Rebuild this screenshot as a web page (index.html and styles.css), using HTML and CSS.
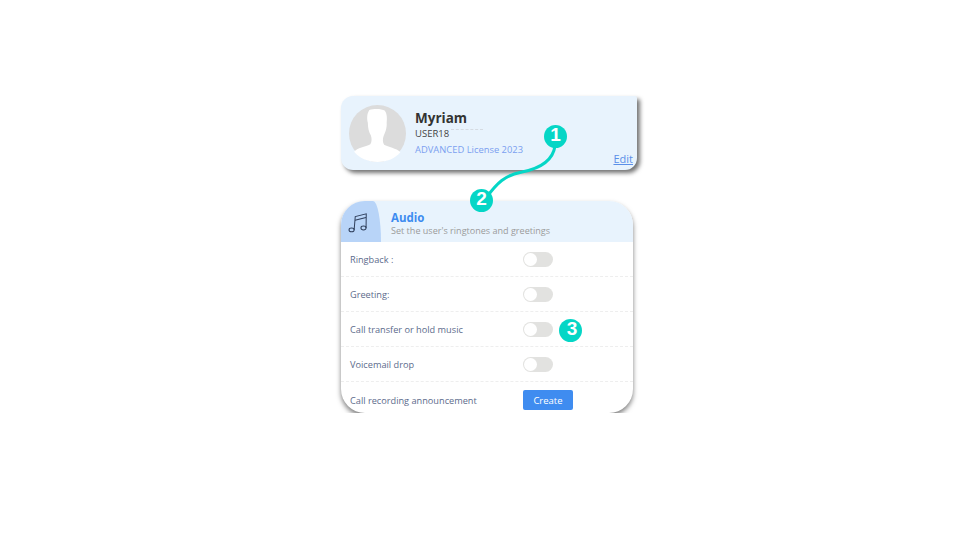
FILE: index.html
```html
<!DOCTYPE html>
<html lang="en">
<head>
    <meta charset="UTF-8">
    <title>User settings</title>
    <link rel="stylesheet" href="styles.css">
</head>
<body>

<div class="page">
    <div class="profile-card">
        <svg class="avatar" viewBox="0 0 56 56">
            <circle cx="28" cy="28" r="28" fill="#dcdcdc"/>
            <path fill="#fff" d="M20 5c4-1.500 12-1.500 15 .5 2.500 3 2.500 8 2 12 .5 5-1.500 10-3 13-1 3-1 6 .5 8.500 4 2.500 12 3 16 7.500-5 6-13 9.500-22.500 9.500S10 52 5 46c3-4 11-5 16-7.500 1.500-2.500 1.500-5.500.5-8.500-2-3-3-8-3-12.500-1-4-1-9 1.500-12.500z"/>
        </svg>
        <div class="profile-info">
            <div class="profile-name">Myriam</div>
            <div class="profile-user">USER18<span class="profile-blur"></span></div>
            <div class="profile-license">ADVANCED License 2023</div>
        </div>
        <a class="profile-edit" href="#">Edit</a>
    </div>

    <div class="audio-card">
        <div class="audio-header">
            <div class="audio-icon">
                <svg viewBox="0 0 24 24" width="22" height="22" fill="none" stroke="#2f3f5c" stroke-width="1.1">
                    <ellipse cx="5" cy="19.500" rx="2.800" ry="2.100"/>
                    <ellipse cx="18" cy="17.500" rx="2.800" ry="2.100"/>
                    <path d="M7.800 19.500 9 5l12-3-.2 15.500"/>
                    <path d="M8.700 9l12-3"/>
                </svg>
            </div>
            <div class="audio-text">
                <div class="audio-title">Audio</div>
                <div class="audio-sub">Set the user's ringtones and greetings</div>
            </div>
        </div>
        <div class="row"><span>Ringback :</span><span class="toggle"></span></div>
        <div class="row"><span>Greeting:</span><span class="toggle"></span></div>
        <div class="row"><span>Call transfer or hold music</span><span class="toggle"></span></div>
        <div class="row"><span>Voicemail drop</span><span class="toggle"></span></div>
        <div class="row row-last"><span>Call recording announcement</span><button class="create-btn">Create</button></div>
    </div>
</div>

<!-- tutorial annotations over the page -->
<svg class="connector" width="960" height="540">
    <path d="M555 146C553 160 542 168 522 172C505 175 497 183 486 198" fill="none" stroke="#05d6c6" stroke-width="3"/>
    <path d="M484 193l7 2-6 6z" fill="#05d6c6"/>
</svg>
<div class="badge badge-1">1</div>
<div class="badge badge-2">2</div>
<div class="badge badge-3">3</div>

</body>
</html>
```

FILE: styles.css
```css
body {
    margin: 0;
    font-family: "Open Sans", sans-serif;
    background-color: #fff;
}
.page {
    width: 296px;
    margin-left: 341px;
    padding-top: 96px;
}

/* Profile card */
.profile-card {
    position: relative;
    display: flex;
    align-items: center;
    gap: 9px;
    height: 74px;
    padding-left: 8px;
    box-sizing: border-box;
    background-color: #e8f3fd;
    border-radius: 12px 2px 12px 12px;
    box-shadow: 3px 3px 4px rgba(0, 0, 0, 0.55);
}
.avatar {
    width: 57px;
    height: 57px;
    flex: none;
}
.profile-name {
    font-size: 13.5px;
    font-weight: 700;
    line-height: 18px;
    color: #333;
}
.profile-user {
    font-size: 9.5px;
    line-height: 14px;
    color: #444;
}
.profile-blur {
    display: inline-block;
    width: 32px;
    margin-left: 2px;
    vertical-align: 7px;
    border-top: 1px dashed #d5dbe2;
}
.profile-license {
    margin-top: 2px;
    font-size: 9.4px;
    line-height: 14px;
    color: #7b9ff0;
}
.profile-edit {
    position: absolute;
    right: 4px;
    bottom: 4px;
    font-size: 11px;
    line-height: 15px;
    color: #5b8fe8;
}

/* Audio card */
.audio-card {
    width: 292px;
    margin-top: 31px;
    background-color: #fff;
    border-radius: 24px;
    overflow: hidden;
    box-shadow: 0 3px 5px rgba(0, 0, 0, 0.5);
}
.audio-header {
    display: flex;
    align-items: center;
    gap: 10px;
    height: 41px;
    background-color: #e8f3fd;
}
.audio-icon {
    display: flex;
    align-items: center;
    justify-content: center;
    width: 40px;
    height: 41px;
    padding: 2px 6px 0 0;
    box-sizing: border-box;
    background-color: #b8d4f8;
    border-top-right-radius: 8px 41px;
}
.audio-text {
    padding-top: 4px;
}
.audio-title {
    font-size: 11.5px;
    font-weight: 700;
    line-height: 14px;
    color: #3d8bf0;
}
.audio-sub {
    font-size: 9.05px;
    line-height: 12px;
    color: #9b9b9b;
}
.row {
    display: grid;
    grid-template-columns: 173px auto;
    justify-content: start;
    align-items: center;
    height: 35px;
    padding: 1px 0 0 9px;
    box-sizing: border-box;
    border-bottom: 1px dashed #eee;
    font-size: 9.2px;
    color: #5c6b8c;
}
.row-last {
    height: 31px;
    padding-top: 5px;
    border-bottom: none;
}
.toggle {
    position: relative;
    display: block;
    width: 30px;
    height: 15px;
    background-color: #e2e2e0;
    border-radius: 8px;
}
.toggle::after {
    content: "";
    position: absolute;
    left: 1px;
    top: 1px;
    width: 13px;
    height: 13px;
    background-color: #fff;
    border-radius: 50%;
}
.create-btn {
    width: 50px;
    height: 20px;
    padding: 0;
    border: none;
    border-radius: 2px;
    background-color: #3f8cf0;
    color: #fff;
    font-family: inherit;
    font-size: 9.5px;
}

/* Annotations */
.connector {
    position: absolute;
    left: 0;
    top: 0;
}
.badge {
    position: absolute;
    width: 23px;
    height: 23px;
    border-radius: 50%;
    background-color: #05d6c6;
    color: #fff;
    font-family: "Liberation Sans", sans-serif;
    font-size: 19px;
    font-weight: 700;
    line-height: 20px;
    text-align: center;
}
.badge-1 { left: 544px; top: 125px; }
.badge-2 { left: 470px; top: 189px; }
.badge-3 { left: 559px; top: 319px; padding-left: 3px; width: 20px; }
```
